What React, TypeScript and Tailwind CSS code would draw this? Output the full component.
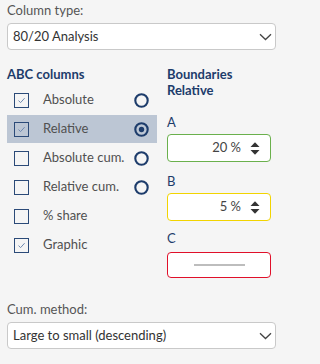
import React from "react";

const navy = "text-[#1d3c6b]";

function Chevron() {
  return (
    <svg width="13" height="8" viewBox="0 0 13 8" className="shrink-0">
      <path d="M1 1.2 L6.5 6.5 L12 1.2" fill="none" stroke="#444" strokeWidth="1.3" />
    </svg>
  );
}

function Select({ value }: { value: string }) {
  return (
    <div className="flex h-[27px] items-center justify-between rounded-[4px] border border-[#c9c9c9] bg-white pl-[5px] pr-[3px] text-[13px] text-[#333]">
      <span>{value}</span>
      <Chevron />
    </div>
  );
}

function Checkbox({ checked }: { checked: boolean }) {
  return (
    <div className="flex h-[15px] w-[15px] items-center justify-center border-[1.5px] border-[#2b4a78] bg-transparent">
      {checked && (
        <svg width="11" height="11" viewBox="0 0 11 11">
          <path d="M2.5 5.6 L4.6 7.6 L8.6 3.2" fill="none" stroke="#6f89b0" strokeWidth="1" />
        </svg>
      )}
    </div>
  );
}

function Radio({ selected }: { selected?: boolean }) {
  return (
    <svg width="15" height="15" viewBox="0 0 15 15">
      <circle cx="7.5" cy="7.5" r="6.2" fill="none" stroke="#1d3c6b" strokeWidth="2.1" />
      {selected && <circle cx="7.5" cy="7.5" r="2.7" fill="#1d3c6b" />}
    </svg>
  );
}

function Spinner() {
  return (
    <svg width="10" height="15" viewBox="0 0 10 15">
      <path d="M0.5 6 L5 1.2 L9.5 6 Z" fill="#333" />
      <path d="M0.5 9 L5 13.8 L9.5 9 Z" fill="#333" />
    </svg>
  );
}

const rows = [
  { label: "Absolute", checked: true, radio: true },
  { label: "Relative", checked: true, radio: true, selected: true },
  { label: "Absolute cum.", checked: false, radio: true },
  { label: "Relative cum.", checked: false, radio: true },
  { label: "% share", checked: false, radio: false },
  { label: "Graphic", checked: true, radio: false },
];

export default function App() {
  return (
    <div
      className="min-h-screen w-full bg-[#f5f5f5] px-[7px] pt-[2px]"
      style={{ fontFamily: "Lato, 'Open Sans', sans-serif" }}
    >
      <div className="h-[16px] text-[13px] leading-[16px] text-[#555]">Column type:</div>
      <div className="mt-[5px] w-[269px]">
        <Select value="80/20 Analysis" />
      </div>

      <div className="mt-[16px] flex gap-[10px]">
        {/* ABC columns */}
        <div className="w-[150px]">
          <div className={`h-[16px] text-[13px] font-bold leading-[16px] ${navy}`}>ABC columns</div>
          <div className="mt-[4px] flex flex-col gap-[1px]">
            {rows.map((r) => (
              <div
                key={r.label}
                className={`flex h-[28px] items-center pl-[7px] pr-[8px] ${r.selected ? "bg-[#bcc6d4]" : ""}`}
              >
                <Checkbox checked={r.checked} />
                <span className="ml-[14px] flex-1 text-[13px] text-[#505050]">{r.label}</span>
                {r.radio && <Radio selected={r.selected} />}
              </div>
            ))}
          </div>
        </div>

        {/* Boundaries */}
        <div className="w-[104px]">
          <div className={`text-[13px] font-bold leading-[16px] ${navy}`}>
            Boundaries
            <br />
            Relative
          </div>

          <div className={`mt-[16px] h-[16px] text-[13px] leading-[16px] ${navy}`}>A</div>
          <div className="mt-[4px] flex h-[28px] items-center justify-end gap-[9px] rounded-[4px] border border-[#6ab04c] bg-white pr-[10px] text-[13px] text-[#444]">
            <span>20 %</span>
            <Spinner />
          </div>

          <div className={`mt-[11px] h-[16px] text-[13px] leading-[16px] ${navy}`}>B</div>
          <div className="mt-[4px] flex h-[28px] items-center justify-end gap-[9px] rounded-[4px] border border-[#f2d400] bg-white pr-[10px] text-[13px] text-[#444]">
            <span>5 %</span>
            <Spinner />
          </div>

          <div className={`mt-[9px] h-[16px] text-[13px] leading-[16px] ${navy}`}>C</div>
          <div className="mt-[6px] flex h-[26px] items-center justify-center rounded-[4px] border border-[#e0102a] bg-white">
            <div className="h-[2px] w-[51px] bg-[#bdbdbd]" />
          </div>
        </div>
      </div>

      <div className="mt-[23px] h-[16px] text-[13px] leading-[16px] text-[#555]">Cum. method:</div>
      <div className="mt-[5px] w-[269px]">
        <Select value="Large to small (descending)" />
      </div>
    </div>
  );
}
